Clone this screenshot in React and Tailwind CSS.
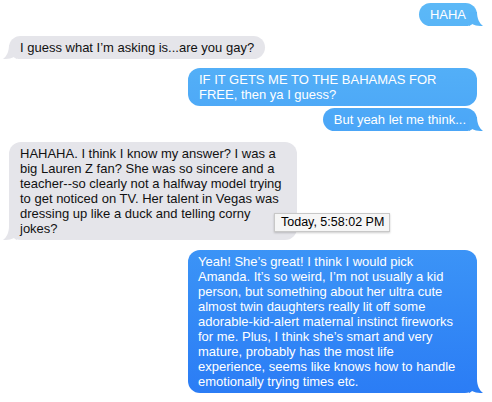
import React from "react";

function TailRight({ fill }) {
  return (
    <svg className="absolute right-[-6px] bottom-0" width="14" height="14" viewBox="0 0 14 14">
      <path d="M0 0 H8 C8 6 10 11 14 14 C10 14.2 6 13.5 3 12 C2 13 1 13.6 0 14 Z" className={fill} />
    </svg>
  );
}

function TailLeft({ fill }) {
  return (
    <svg className="absolute left-[-6px] bottom-0" width="14" height="14" viewBox="0 0 14 14">
      <path d="M14 0 H6 C6 6 4 11 0 14 C4 14.2 8 13.5 11 12 C12 13 13 13.6 14 14 Z" className={fill} />
    </svg>
  );
}

function Lines({ lines }) {
  return lines.map((l, i) => (
    <div key={i} className="whitespace-nowrap">{l}</div>
  ));
}

export default function App() {
  const blue = "bg-fixed bg-linear-to-b from-[#5cb9f7] from-0% to-[#2a7bf5] to-100% text-white";
  const gray = "bg-[#e5e5ea] text-[#111]";
  return (
    <div
      className="w-[492px] h-[402px] bg-white flex flex-col pl-[9px] pr-[15px] pt-[3px] text-[13px] leading-[15px] overflow-hidden relative"
      style={{ fontFamily: '"Liberation Sans", Arial, sans-serif' }}
    >
      <div className="flex justify-end">
        <div className={`relative rounded-[12px] px-[11px] py-[4px] ${blue}`}>
          HAHA
          <TailRight fill="fill-[#59b5f7]" />
        </div>
      </div>

      <div className="flex justify-start mt-[10px]">
        <div className={`relative rounded-[12px] px-[11px] py-[4px] ${gray}`}>
          I guess what I’m asking is...are you gay?
          <TailLeft fill="fill-[#e5e5ea]" />
        </div>
      </div>

      <div className="flex justify-end mt-[9px]">
        <div className={`relative rounded-[12px] pl-[11px] py-[4px] w-[289px] ${blue}`}>
          <Lines lines={["IF IT GETS ME TO THE BAHAMAS FOR", "FREE, then ya I guess?"]} />
        </div>
      </div>

      <div className="flex justify-end mt-[2px]">
        <div className={`relative rounded-[12px] px-[11px] py-[4px] ${blue}`}>
          But yeah let me think...
          <TailRight fill="fill-[#4da9f6]" />
        </div>
      </div>

      <div className="flex justify-start mt-[11px]">
        <div className={`relative rounded-[12px] pl-[11px] py-[4px] w-[288px] ${gray}`}>
          <Lines
            lines={[
              "HAHAHA. I think I know my answer? I was a",
              "big Lauren Z fan? She was so sincere and a",
              "teacher--so clearly not a halfway model trying",
              "to get noticed on TV. Her talent in Vegas was",
              "dressing up like a duck and telling corny",
              "jokes?",
            ]}
          />
          <TailLeft fill="fill-[#e5e5ea]" />
        </div>
      </div>

      <div className="flex justify-end mt-[10px]">
        <div className={`relative rounded-[12px] pl-[10px] py-[4px] w-[289px] ${blue}`}>
          <Lines
            lines={[
              "Yeah! She’s great! I think I would pick",
              "Amanda. It’s so weird, I’m not usually a kid",
              "person, but something about her ultra cute",
              "almost twin daughters really lit off some",
              "adorable-kid-alert maternal instinct fireworks",
              "for me. Plus, I think she’s smart and very",
              "mature, probably has the most life",
              "experience, seems like knows how to handle",
              "emotionally trying times etc.",
            ]}
          />
          <TailRight fill="fill-[#2c7ef5]" />
        </div>
      </div>

      <div className="absolute left-[274px] top-[213px] h-[19px] pl-[6px] pr-[5px] bg-[#f6f6f6] border border-[#c8c8c8] shadow-[0_1px_2px_rgba(0,0,0,0.2)] text-[12.5px] leading-[17px] text-black whitespace-nowrap">
        Today, 5:58:02 PM
      </div>
    </div>
  );
}
